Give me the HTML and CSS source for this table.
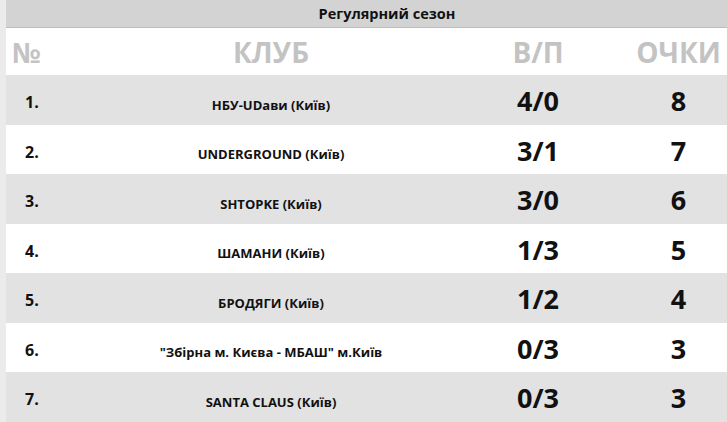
FILE: index.html
```html
<!DOCTYPE html>
<html lang="uk">
<head>
<meta charset="utf-8">
<link rel="stylesheet" href="styles.css">
</head>
<body>
<div class="page">
  <div class="standings">
    <div class="title">Регулярний сезон</div>
    <div class="row head">
      <div class="c-num">№</div>
      <div class="c-club">КЛУБ</div>
      <div class="c-wl">В/П</div>
      <div class="c-pts">ОЧКИ</div>
    </div>
    <div class="row odd">
      <div class="c-num">1.</div>
      <div class="c-club">НБУ-UDави (Київ)</div>
      <div class="c-wl">4/0</div>
      <div class="c-pts">8</div>
    </div>
    <div class="row">
      <div class="c-num">2.</div>
      <div class="c-club">UNDERGROUND (Київ)</div>
      <div class="c-wl">3/1</div>
      <div class="c-pts">7</div>
    </div>
    <div class="row odd">
      <div class="c-num">3.</div>
      <div class="c-club">SHTOPKE (Київ)</div>
      <div class="c-wl">3/0</div>
      <div class="c-pts">6</div>
    </div>
    <div class="row">
      <div class="c-num">4.</div>
      <div class="c-club">ШАМАНИ (Київ)</div>
      <div class="c-wl">1/3</div>
      <div class="c-pts">5</div>
    </div>
    <div class="row odd">
      <div class="c-num">5.</div>
      <div class="c-club">БРОДЯГИ (Київ)</div>
      <div class="c-wl">1/2</div>
      <div class="c-pts">4</div>
    </div>
    <div class="row">
      <div class="c-num">6.</div>
      <div class="c-club">"Збірна м. Києва - МБАШ" м.Київ</div>
      <div class="c-wl">0/3</div>
      <div class="c-pts">3</div>
    </div>
    <div class="row odd">
      <div class="c-num">7.</div>
      <div class="c-club">SANTA CLAUS (Київ)</div>
      <div class="c-wl">0/3</div>
      <div class="c-pts">3</div>
    </div>
  </div>
</div>
</body>
</html>
```

FILE: styles.css
```css
html, body {
  margin: 0;
  padding: 0;
}
body {
  background: #ebebeb;
  font-family: "Open Sans", "Liberation Sans", sans-serif;
  font-weight: 700;
  color: #111;
}
.page {
  padding-left: 6px;
  overflow: hidden;
  height: 422px;
}
.standings {
  width: 724px;
  background: #fff;
}
.title {
  height: 27px;
  line-height: 27px;
  background: #d3d3d3;
  border-bottom: 1px solid #bdbdbd;
  text-align: center;
  font-size: 14.5px;
  padding-left: 38px;
}
.row {
  display: grid;
  grid-template-columns: 94px 342px 192px 89px;
  align-items: center;
  height: 49.5px;
  background: #fff;
}
.row.odd {
  background: #e2e2e2;
}
.row.head {
  height: 47px;
  color: #c3c3c3;
  font-size: 28px;
}
.row.head .c-num {
  padding-left: 6px;
  padding-top: 0;
  text-align: left;
  font-size: 28px;
}
.c-num {
  padding-left: 19px;
  padding-top: 5px;
  font-size: 16px;
}
.c-club {
  text-align: center;
  font-size: 13px;
  padding-top: 10px;
}
.row.head .c-club {
  font-size: 28px;
  padding-top: 0;
}
.c-wl, .c-pts {
  text-align: center;
  font-size: 27px;
  padding-top: 2px;
}
.row.head .c-wl, .row.head .c-pts {
  font-size: 28px;
  padding-top: 0;
}
```
